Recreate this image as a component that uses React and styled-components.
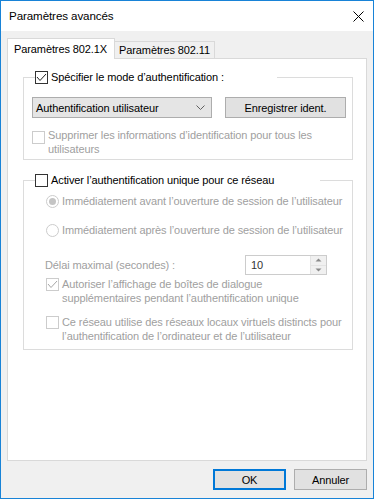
import React from 'react';
import styled, { createGlobalStyle } from 'styled-components';

const GlobalStyle = createGlobalStyle`
  html, body { margin: 0; padding: 0; background: #ffffff; }
  body {
    font-family: "Liberation Sans", Arial, sans-serif;
    font-size: 11px;
    letter-spacing: -0.1px;
    color: #000000;
  }
  *, *::before, *::after { box-sizing: border-box; }
`;

const Window = styled.div`
  width: 374px;
  height: 499px;
  border: 1px solid #1883d7;
  background: #f0f0f0;
  display: flex;
  flex-direction: column;
`;

const TitleBar = styled.div`
  flex: none;
  height: 30px;
  background: #ffffff;
  display: flex;
  align-items: center;
  justify-content: space-between;
  padding-left: 8px;
`;

const Title = styled.span`
  font-size: 11.6px;
  line-height: 16px;
`;

const CloseButton = styled.button`
  width: 29px;
  height: 30px;
  border: 0;
  padding: 0;
  background: transparent;
  display: flex;
  align-items: center;
  justify-content: center;
`;

const Body = styled.div`
  flex: 1;
  display: flex;
  flex-direction: column;
  padding: 7px 6px 0 6px;
`;

const TabStrip = styled.div`
  display: flex;
  align-items: flex-end;
  height: 20px;
`;

const Tab = styled.div`
  position: relative;
  display: flex;
  align-items: center;
  border: 1px solid #d9d9d9;
  border-bottom: 0;
  width: ${p => (p.$active ? 108 : 101)}px;
  height: ${p => (p.$active ? 21 : 17)}px;
  margin-bottom: ${p => (p.$active ? -1 : 0)}px;
  margin-left: ${p => (p.$active ? 0 : -1)}px;
  padding-left: ${p => (p.$active ? 6 : 4)}px;
  padding-bottom: ${p => (p.$active ? 1 : 0)}px;
  background: ${p => (p.$active ? '#ffffff' : '#f0f0f0')};
  z-index: ${p => (p.$active ? 1 : 0)};
  white-space: nowrap;
`;

const Panel = styled.div`
  height: 403px;
  background: #ffffff;
  border: 1px solid #d9d9d9;
  padding: 12px 13px 0 15px;
  display: flex;
  flex-direction: column;
`;

const Group = styled.fieldset`
  margin: ${p => p.$mt || 0}px 0 0 0;
  padding: 0 6px ${p => p.$pb}px ${p => p.$pl}px;
  border: 1px solid #dcdcdc;
  min-width: 0;
`;

const Legend = styled.legend`
  margin-left: ${p => p.$ml}px;
  padding: 0;
  width: ${p => p.$w}px;
  height: 13px;
  display: flex;
  align-items: center;
  gap: 3px;
  line-height: 13px;
  white-space: nowrap;
`;

const Box = styled.span`
  flex: none;
  width: 13px;
  height: 13px;
  border: 1px solid ${p => (p.$disabled ? '#cccccc' : '#333333')};
  background: #ffffff;
  display: flex;
  align-items: center;
  justify-content: center;
  margin-top: ${p => p.$offset || 0}px;
`;

const RadioCircle = styled.span`
  flex: none;
  width: 13px;
  height: 13px;
  border-radius: 50%;
  border: 1px solid #cccccc;
  background: #ffffff;
  display: flex;
  align-items: center;
  justify-content: center;
  &::after {
    content: '';
    display: ${p => (p.$checked ? 'block' : 'none')};
    width: 7px;
    height: 7px;
    border-radius: 50%;
    background: #c4c4c4;
  }
`;

const Row = styled.div`
  display: flex;
  align-items: ${p => p.$align || 'center'};
  gap: ${p => p.$gap ?? 3}px;
  margin-top: ${p => p.$mt || 0}px;
  margin-left: ${p => p.$ml || 0}px;
`;

const Label = styled.span`
  color: ${p => (p.$disabled ? '#a0a0a0' : '#000000')};
  line-height: ${p => p.$lh || 13}px;
  white-space: ${p => (p.$wrap ? 'normal' : 'nowrap')};
  width: ${p => (p.$w ? `${p.$w}px` : 'auto')};
`;

const Combo = styled.div`
  width: 180px;
  height: 21px;
  background: #e5e5e5;
  border: 1px solid #adadad;
  display: flex;
  align-items: center;
  justify-content: space-between;
  padding: 0 6px 0 3px;
  white-space: nowrap;
`;

const Button = styled.button`
  font: inherit;
  letter-spacing: inherit;
  color: #000000;
  width: ${p => p.$w}px;
  height: 21px;
  padding: 0;
  background: #e1e1e1;
  border: ${p => (p.$default ? '2px solid #0078d7' : '1px solid #adadad')};
  display: flex;
  align-items: center;
  justify-content: center;
`;

const DelayRow = styled.div`
  display: grid;
  grid-template-columns: 200px 82px;
  align-items: center;
  margin-top: 18px;
  margin-left: -1px;
`;

const Spin = styled.div`
  height: 20px;
  border: 1px solid #cccccc;
  background: #ffffff;
  display: flex;
  align-items: center;
  justify-content: space-between;
  padding-left: 5px;
  color: #333333;
`;

const SpinButtons = styled.div`
  width: 16px;
  height: 18px;
  display: flex;
  flex-direction: column;
  border-left: 1px solid #e3e3e3;
`;

const SpinHalf = styled.div`
  flex: 1;
  background: #f0f0f0;
  display: flex;
  align-items: center;
  justify-content: center;
  border-top: ${p => (p.$bottom ? '1px solid #e3e3e3' : '0')};
`;

const Footer = styled.div`
  display: flex;
  justify-content: flex-end;
  gap: 8px;
  padding-top: 8px;
`;

const Check = ({ color }) => (
  <svg width="11" height="11" viewBox="0 0 11 11">
    <polyline points="1,5 4,8.5 10,2" fill="none" stroke={color} strokeWidth="1" />
  </svg>
);

const Checkbox = ({ checked, disabled, offset }) => (
  <Box $disabled={disabled} $offset={offset}>
    {checked && <Check color={disabled ? '#a6a6a6' : '#222222'} />}
  </Box>
);

const Chevron = () => (
  <svg width="9" height="5" viewBox="0 0 9 5">
    <polyline points="0.5,0.5 4.5,4.5 8.5,0.5" fill="none" stroke="#606060" strokeWidth="1" />
  </svg>
);

const Arrow = ({ down }) => (
  <svg width="7" height="4" viewBox="0 0 7 4">
    <polygon points={down ? '0.5,0.5 6.5,0.5 3.5,3.5' : '0.5,3.5 6.5,3.5 3.5,0.5'} fill="#8a8a8a" />
  </svg>
);

const CloseIcon = () => (
  <svg width="11" height="11" viewBox="0 0 11 11">
    <path d="M0.5 0.5 L10.5 10.5 M10.5 0.5 L0.5 10.5" stroke="#000000" strokeWidth="1" fill="none" />
  </svg>
);

export default function App() {
  return (
    <>
      <GlobalStyle />
      <Window>
        <TitleBar>
          <Title>Paramètres avancés</Title>
          <CloseButton aria-label="Fermer">
            <CloseIcon />
          </CloseButton>
        </TitleBar>
        <Body>
          <TabStrip>
            <Tab $active>Paramètres 802.1X</Tab>
            <Tab>Paramètres 802.11</Tab>
          </TabStrip>
          <Panel>
            <Group $pl={8} $pb={3}>
              <Legend $ml={3} $w={242}>
                <Checkbox checked />
                <Label>Spécifier le mode d’authentification :</Label>
              </Legend>
              <Row $mt={13} $gap={13}>
                <Combo>
                  <span>Authentification utilisateur</span>
                  <Chevron />
                </Combo>
                <Button $w={121}>Enregistrer ident.</Button>
              </Row>
              <Row $mt={11} $align="flex-start">
                <Checkbox disabled offset={2} />
                <Label $disabled $wrap $lh={13.5} $w={300}>
                  Supprimer les informations d’identification pour tous les utilisateurs
                </Label>
              </Row>
            </Group>

            <Group $mt={14} $pl={22} $pb={6}>
              <Legend $ml={-11} $w={285}>
                <Checkbox />
                <Label>Activer l’authentification unique pour ce réseau</Label>
              </Legend>
              <Row $mt={8}>
                <RadioCircle $checked />
                <Label $disabled>Immédiatement avant l’ouverture de session de l’utilisateur</Label>
              </Row>
              <Row $mt={16}>
                <RadioCircle />
                <Label $disabled>Immédiatement après l’ouverture de session de l’utilisateur</Label>
              </Row>
              <DelayRow>
                <Label $disabled>Délai maximal (secondes) :</Label>
                <Spin>
                  <span>10</span>
                  <SpinButtons>
                    <SpinHalf>
                      <Arrow />
                    </SpinHalf>
                    <SpinHalf $bottom>
                      <Arrow down />
                    </SpinHalf>
                  </SpinButtons>
                </Spin>
              </DelayRow>
              <Row $mt={3} $align="flex-start">
                <Checkbox checked disabled />
                <Label $disabled $wrap $lh={13.5} $w={250}>
                  Autoriser l’affichage de boîtes de dialogue supplémentaires pendant l’authentification unique
                </Label>
              </Row>
              <Row $mt={11} $align="flex-start">
                <Checkbox disabled />
                <Label $disabled $wrap $lh={13.5} $w={290}>
                  Ce réseau utilise des réseaux locaux virtuels distincts pour l’authentification de l’ordinateur et de l’utilisateur
                </Label>
              </Row>
            </Group>
          </Panel>
          <Footer>
            <Button $default $w={73}>OK</Button>
            <Button $w={73}>Annuler</Button>
          </Footer>
        </Body>
      </Window>
    </>
  );
}
